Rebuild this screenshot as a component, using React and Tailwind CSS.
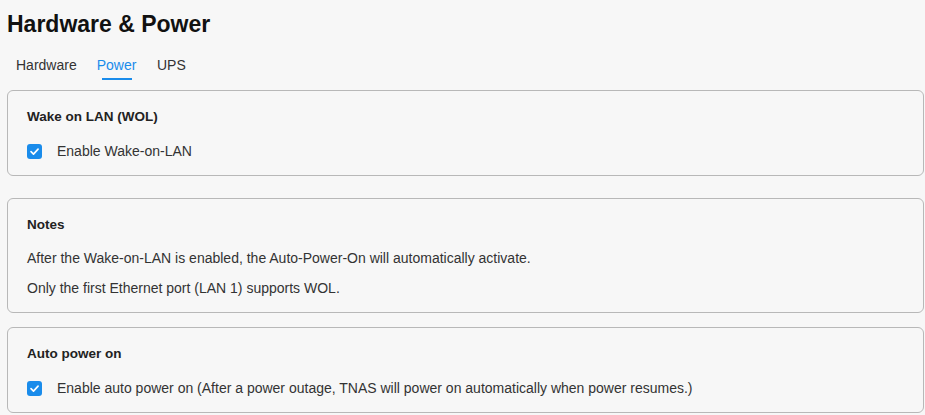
import { useState } from "react";

const Checkbox = ({ checked, onChange, label }) => (
  <label className="flex items-center h-[20px] cursor-pointer select-none">
    <span
      onClick={onChange}
      className={`w-[15px] h-[15px] rounded-[3px] flex items-center justify-center ${
        checked ? "bg-[#1a8ceb]" : "bg-white border border-[#b5b5b5]"
      }`}
    >
      {checked && (
        <svg viewBox="0 0 12 12" className="w-[11px] h-[11px]">
          <path d="M2.2 6.2 L4.9 8.8 L9.9 3.4" fill="none" stroke="white" strokeWidth="1.8" strokeLinecap="round" strokeLinejoin="round" />
        </svg>
      )}
    </span>
    <span className="ml-[15px] text-[14px] text-[#333]">{label}</span>
  </label>
);

const Card = ({ title, children, className = "" }) => (
  <div className={`border border-[#b8b8b8] rounded-[6px] bg-[#f7f7f7] pt-[16px] pb-[14px] px-[19px] ${className}`}>
    <h3 className="text-[13.5px] leading-[20px] font-bold text-[#222]">{title}</h3>
    {children}
  </div>
);

export default function App() {
  const [tab, setTab] = useState("Power");
  const [wol, setWol] = useState(true);
  const [autoOn, setAutoOn] = useState(true);
  const tabs = ["Hardware", "Power", "UPS"];

  return (
    <div className="min-h-screen bg-[#f7f7f7] pl-[7px] pr-[1px] pb-4 font-['Liberation_Sans',Arial,sans-serif]">
      <h1 className="pt-[10px] text-[23px] leading-[28px] font-bold text-[#111]">Hardware &amp; Power</h1>

      <div className="flex mt-[17px] ml-[9px] gap-[20px]">
        {tabs.map((t) => (
          <button key={t} onClick={() => setTab(t)} className="flex flex-col items-center">
            <span className={`text-[14px] leading-[20px] ${tab === t ? "text-[#1a8ceb]" : "text-[#333]"}`}>{t}</span>
            <span className={`mt-[3px] w-[30px] h-[2px] ${tab === t ? "bg-[#1a8ceb]" : "bg-transparent"}`} />
          </button>
        ))}
      </div>

      <Card title="Wake on LAN (WOL)" className="mt-[10px]">
        <div className="mt-[14px]">
          <Checkbox checked={wol} onChange={() => setWol(!wol)} label="Enable Wake-on-LAN" />
        </div>
      </Card>

      <Card title="Notes" className="mt-[22px]">
        <p className="mt-[13px] text-[14px] leading-[20px] text-[#333]">
          After the Wake-on-LAN is enabled, the Auto-Power-On will automatically activate.
        </p>
        <p className="mt-[10px] text-[14px] leading-[20px] text-[#333]">
          Only the first Ethernet port (LAN 1) supports WOL.
        </p>
      </Card>

      <Card title="Auto power on" className="mt-[14px]">
        <div className="mt-[14px]">
          <Checkbox
            checked={autoOn}
            onChange={() => setAutoOn(!autoOn)}
            label="Enable auto power on (After a power outage, TNAS will power on automatically when power resumes.)"
          />
        </div>
      </Card>
    </div>
  );
}
